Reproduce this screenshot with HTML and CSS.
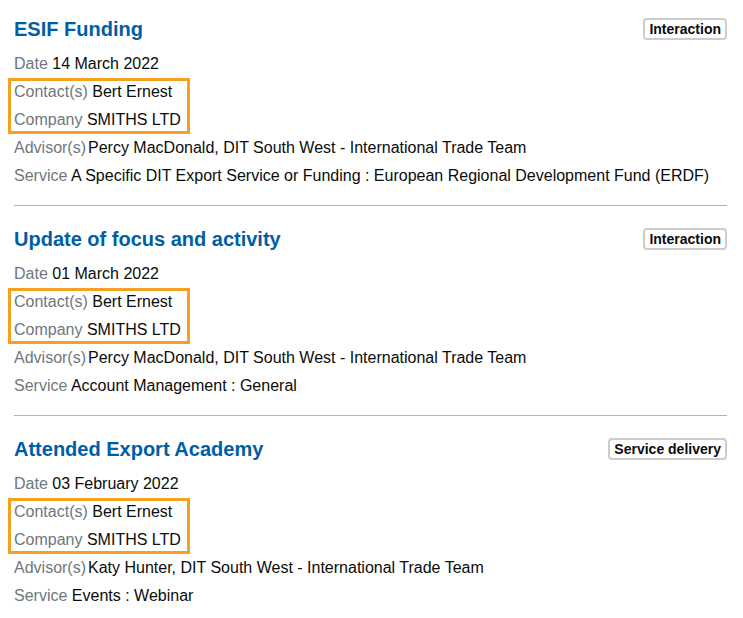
FILE: index.html
```html
<!DOCTYPE html>
<html lang="en">
<head>
<meta charset="utf-8">
<title>Activity</title>
<link rel="stylesheet" href="styles.css">
</head>
<body>
<ol class="list">
  <li class="item">
    <div class="head">
      <h3 class="title">ESIF Funding</h3>
      <span class="badge">Interaction</span>
    </div>
    <div class="rows">
      <div class="row"><span class="label">Date</span> <span class="value">14 March 2022</span></div>
      <div class="hl">
        <div class="row"><span class="label">Contact(s)</span> <span class="value">Bert Ernest</span></div>
        <div class="row"><span class="label">Company</span> <span class="value">SMITHS LTD</span></div>
      </div>
      <div class="row"><span class="label tight">Advisor(s)</span><span class="value">Percy MacDonald, DIT South West - International Trade Team</span></div>
      <div class="row"><span class="label">Service</span> <span class="value">A Specific DIT Export Service or Funding : European Regional Development Fund (ERDF)</span></div>
    </div>
  </li>
  <li class="item">
    <div class="head">
      <h3 class="title">Update of focus and activity</h3>
      <span class="badge">Interaction</span>
    </div>
    <div class="rows">
      <div class="row"><span class="label">Date</span> <span class="value">01 March 2022</span></div>
      <div class="hl">
        <div class="row"><span class="label">Contact(s)</span> <span class="value">Bert Ernest</span></div>
        <div class="row"><span class="label">Company</span> <span class="value">SMITHS LTD</span></div>
      </div>
      <div class="row"><span class="label tight">Advisor(s)</span><span class="value">Percy MacDonald, DIT South West - International Trade Team</span></div>
      <div class="row"><span class="label">Service</span> <span class="value">Account Management : General</span></div>
    </div>
  </li>
  <li class="item">
    <div class="head">
      <h3 class="title">Attended Export Academy</h3>
      <span class="badge">Service delivery</span>
    </div>
    <div class="rows">
      <div class="row"><span class="label">Date</span> <span class="value">03 February 2022</span></div>
      <div class="hl">
        <div class="row"><span class="label">Contact(s)</span> <span class="value">Bert Ernest</span></div>
        <div class="row"><span class="label">Company</span> <span class="value">SMITHS LTD</span></div>
      </div>
      <div class="row"><span class="label tight">Advisor(s)</span><span class="value">Katy Hunter, DIT South West - International Trade Team</span></div>
      <div class="row"><span class="label">Service</span> <span class="value">Events : Webinar</span></div>
    </div>
  </li>
</ol>
</body>
</html>
```

FILE: styles.css
```css
html, body {
  margin: 0;
  padding: 0;
  background: #ffffff;
}
body {
  font-family: "Liberation Sans", Arial, sans-serif;
  color: #0b0c0c;
  padding: 15px 16px 0 14px;
}
.list {
  list-style: none;
  margin: 0;
  padding: 0;
}
.item {
  margin: 0;
  padding: 0 0 15px 0;
  border-bottom: 1px solid #b1b4b6;
  margin-bottom: 19px;
}
.item:last-child {
  border-bottom: none;
}
.head {
  display: flex;
  justify-content: space-between;
  align-items: center;
  height: 28px;
  margin-bottom: 7px;
}
.title {
  margin: 0;
  font-size: 20px;
  line-height: 28px;
  font-weight: 700;
  color: #005ea5;
}
.badge {
  display: inline-flex;
  align-items: center;
  box-sizing: border-box;
  height: 22px;
  padding: 0 4px;
  border: 2px solid #cdcdcd;
  border-radius: 4px;
  font-size: 14px;
  font-weight: 700;
  color: #0b0c0c;
}
.rows {
  display: flex;
  flex-direction: column;
}
.row {
  font-size: 16px;
  line-height: 28px;
  height: 28px;
  white-space: nowrap;
}
.label {
  color: #6f777b;
}
.tight {
  margin-right: 2px;
}
.value {
  color: #0b0c0c;
}
.hl {
  width: fit-content;
  margin-left: -6px;
  padding: 0 9px 0 6px;
  box-shadow: inset 0 0 0 3px #f6a022;
}
```
